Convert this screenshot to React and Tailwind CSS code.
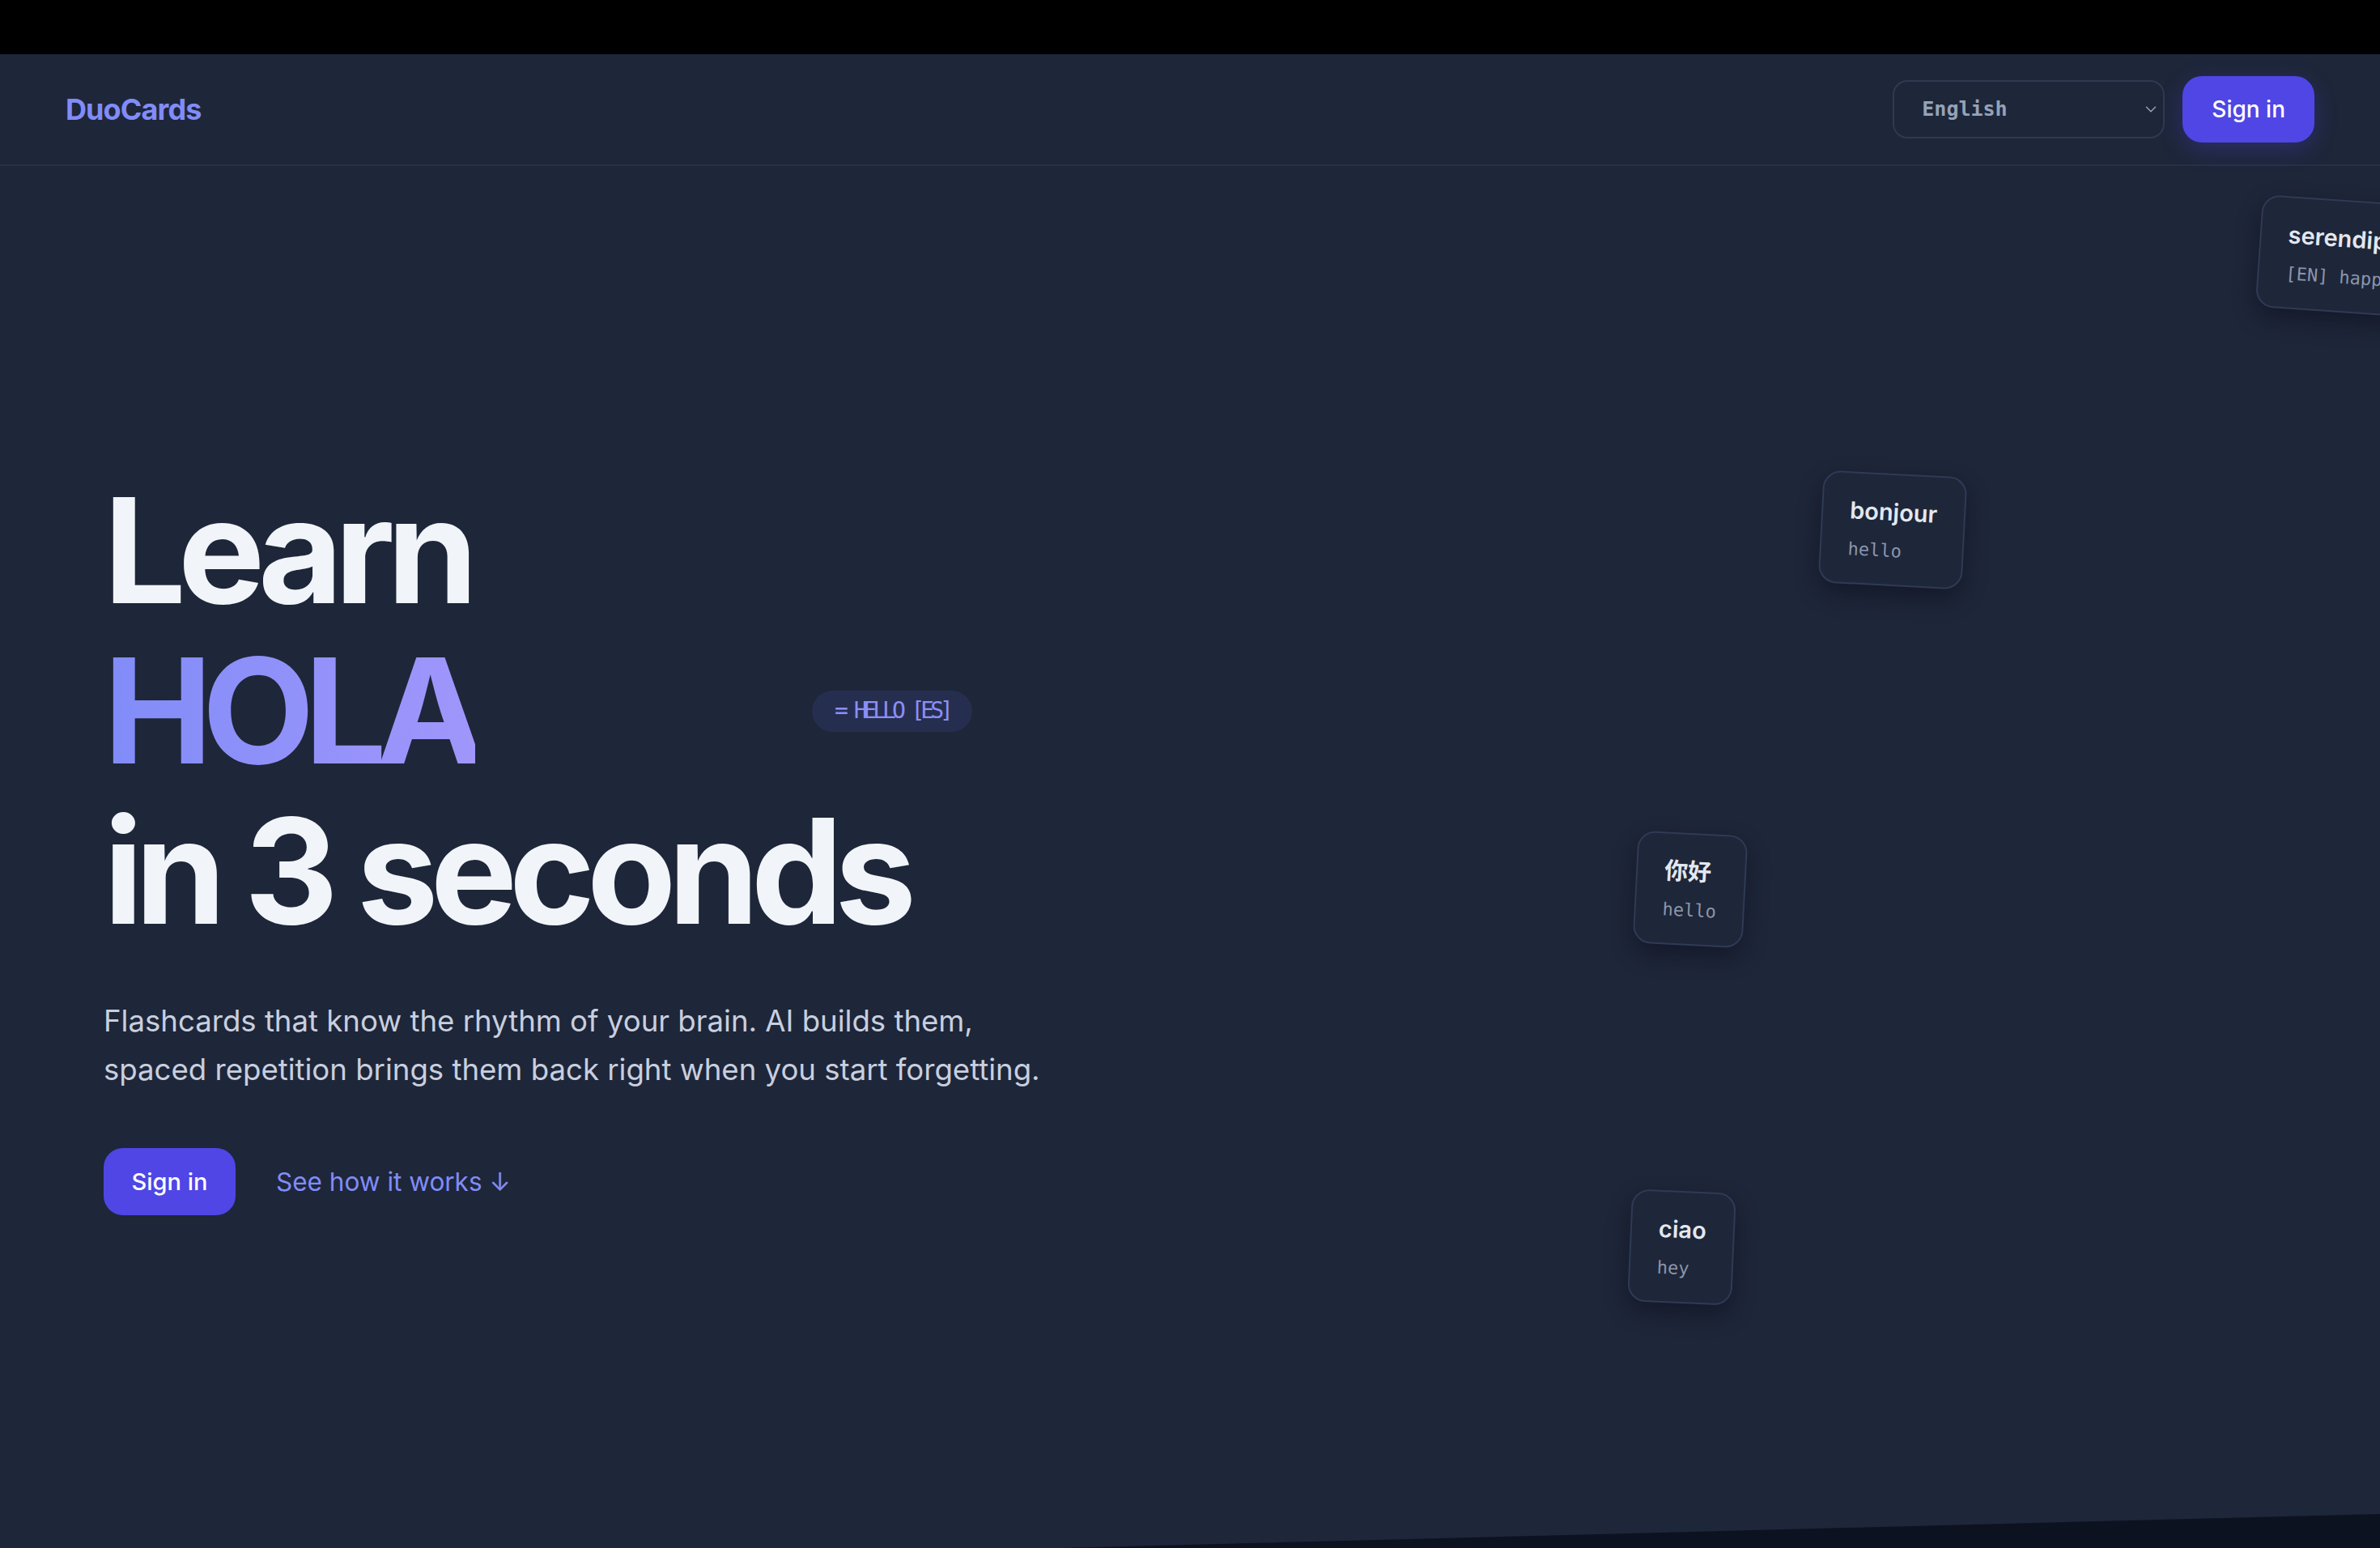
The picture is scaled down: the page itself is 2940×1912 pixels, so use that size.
import { ChevronDown } from 'lucide-react'

const sans = "font-['Inter','Noto_Sans','Noto_Sans_CJK_SC',sans-serif]"
const mono = "font-['DejaVu_Sans_Mono','Liberation_Mono',monospace]"

const floatingCards = [
  { word: 'serendipity', hint: '[EN] happy accident', pos: 'left-[2790px] top-[184px] rotate-[4deg]' },
  { word: 'bonjour', hint: 'hello', pos: 'left-[2249px] top-[518px] rotate-[3deg]' },
  { word: '你好', hint: 'hello', pos: 'left-[2020px] top-[962px] rotate-[3deg]' },
  { word: 'ciao', hint: 'hey', pos: 'left-[2013px] top-[1404px] rotate-[2.5deg]' },
]

function FloatingCard({ word, hint, pos }) {
  return (
    <div
      className={`absolute ${pos} rounded-[22px] border-2 border-[#2f3a56] bg-[#1e2639] px-[33px] py-[26px] shadow-[0_12px_28px_rgba(8,12,24,0.45)]`}
    >
      <div className="whitespace-nowrap text-[29px] leading-[40px] font-semibold text-[#e2e8f0]">{word}</div>
      <div className={`${mono} mt-[13px] whitespace-nowrap text-[22px] leading-[30px] text-[#8b95ab]`}>{hint}</div>
    </div>
  )
}

export default function App() {
  return (
    <div className={`${sans} min-h-screen w-full bg-black`}>
      <div className="h-[67px]" />

      <main className="relative h-[1845px] overflow-hidden bg-[#1e2639]">
        <header className="flex h-[138px] items-center justify-between border-b-2 border-[#273049] pl-[81px] pr-[81px]">
          <span className="text-[36px] font-bold tracking-[-0.025em] text-[#818cf8]">DuoCards</span>

          <div className="flex items-center gap-[22px]">
            <div className="flex h-[72px] w-[336px] items-center justify-between rounded-[18px] border-2 border-[#2f3a52] pl-[34px] pr-[4px]">
              <span className={`${mono} text-[25px] font-bold text-[#94a3b8]`}>English</span>
              <ChevronDown className="h-[22px] w-[22px] text-[#94a3b8]" strokeWidth={1.6} />
            </div>
            <button className="h-[82px] rounded-[24px] bg-[#4f46e5] px-[36px] text-[28px] font-medium text-white shadow-[0_8px_28px_rgba(79,70,229,0.28)]">
              Sign in
            </button>
          </div>
        </header>

        <section className="pl-[128px] pt-[376px]">
          <h1 className="text-[180px] font-bold leading-[198px] tracking-[-0.055em] text-[#f1f5f9]">
            <div>Learn</div>
            <div className="flex items-center">
              <span className="inline-block w-[875px]">
                <span className="bg-gradient-to-r from-[#818cf8] to-[#a096fb] bg-clip-text tracking-[-0.07em] text-transparent">HOLA</span>
              </span>
              <span
                className={`${mono} flex h-[51px] items-center rounded-full bg-[#262e50] px-[28px] text-[28px] font-normal leading-none tracking-[-0.18em] text-[#8b8ff8]`}
              >
                = HELLO [ES]
              </span>
            </div>
            <div>in 3 seconds</div>
          </h1>

          <p className="mt-[56px] max-w-[1190px] text-[36.6px] leading-[60px] text-[#c8cfdf]">
            Flashcards that know the rhythm of your brain. AI builds them, spaced repetition brings them back right when you start forgetting.
          </p>

          <div className="mt-[67px] flex items-center gap-[50px]">
            <button className="h-[83px] w-[163px] rounded-[24px] bg-[#4f46e5] text-[29px] font-medium text-white">
              Sign in
            </button>
            <a className="text-[31.5px] text-[#818cf8]">See how it works ↓</a>
          </div>
        </section>

        {floatingCards.map((c) => (
          <FloatingCard key={c.word} {...c} />
        ))}

        {/* edge of the next section peeking in */}
        <div className="absolute bottom-0 right-0 h-[42px] w-[1627px] bg-[#0d1221] [clip-path:polygon(0_100%,100%_0,100%_100%)]" />
      </main>
    </div>
  )
}
